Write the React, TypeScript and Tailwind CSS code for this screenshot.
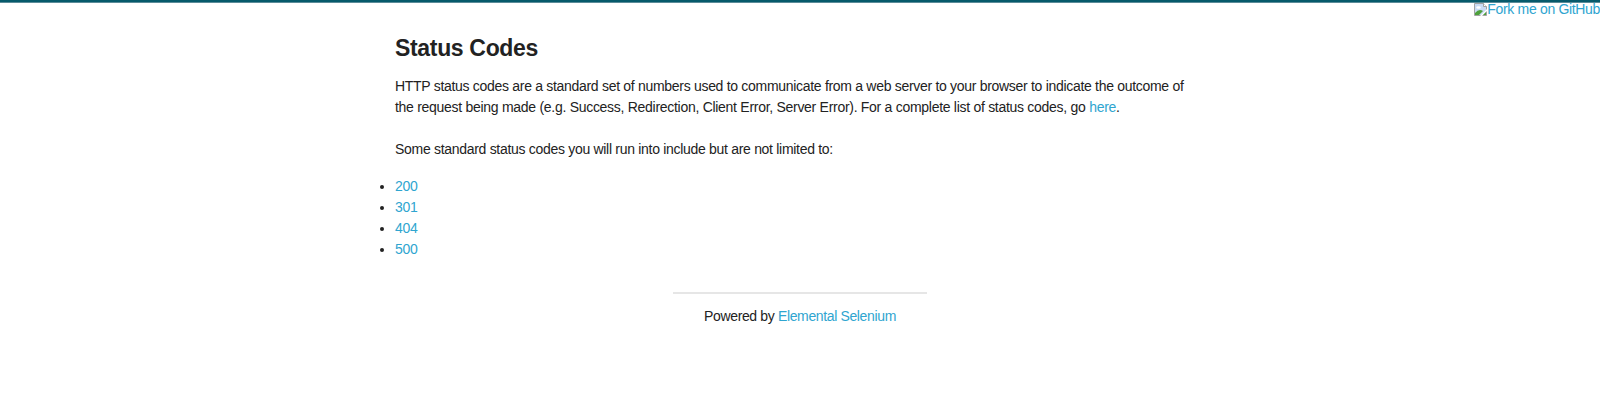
const link = "text-[#2fa5d0]";

function BrokenImage() {
  return (
    <svg className="block shrink-0" width="13" height="16" viewBox="0 0 13 16">
      <path d="M0.5 2.5H9.5L12.5 5.5V14.5H0.5Z" fill="#c9dbf5" stroke="#a3a3a3" />
      <path d="M9.5 2.5V5.5H12.5" fill="#fff" stroke="#a3a3a3" />
      <ellipse cx="4.5" cy="6.5" rx="2.3" ry="1.3" fill="#fff" />
      <path d="M1 14V12Q5 7 9 10L5 14Z" fill="#4fa13c" />
      <path d="M5.5 15.5L13.5 7.5V9.5L7.5 15.5Z" fill="#fff" />
      <path d="M9 14L12 11V14Z" fill="#4fa13c" />
    </svg>
  );
}

export default function App() {
  return (
    <div className="relative min-h-[407px] bg-white text-[#222222] font-['Liberation_Sans',Arial,sans-serif]">
      <div className="h-[2px] bg-[#065a6b]" />
      <div className="h-px bg-[#5b8c99]" />
      <a className={`${link} absolute right-0 top-px flex items-center text-[14px] leading-4 tracking-[-0.33px]`}>
        <BrokenImage />
        <span>Fork me on GitHub</span>
      </a>
      <main className="ml-[395px] w-[800px] pt-[28px] text-[14px] leading-[21px] tracking-[-0.3px]">
        <h3 className="text-[23px] font-bold leading-[34px] tracking-[-0.33px]">Status Codes</h3>
        <p className="mt-[11px] whitespace-nowrap">
          HTTP status codes are a standard set of numbers used to communicate from a web server to your browser to indicate the outcome of<br />
          <span className="tracking-[-0.285px]">the request being made (e.g. Success, Redirection, Client Error, Server Error). For a complete list of status codes, go <a className={link}>here</a>.</span>
          <br /><br />
          Some standard status codes you will run into include but are not limited to:
        </p>
        <ul className="mt-[16px] list-disc">
          {["200", "301", "404", "500"].map((code) => (
            <li key={code}><a className={link}>{code}</a></li>
          ))}
        </ul>
      </main>
      <footer className="mx-auto mt-[32px] w-[254px] border-t-2 border-[#e6e6e6] pt-[12px] text-center text-[14px] leading-[21px] tracking-[-0.36px]">
        Powered by <a className={link}>Elemental Selenium</a>
      </footer>
    </div>
  );
}
